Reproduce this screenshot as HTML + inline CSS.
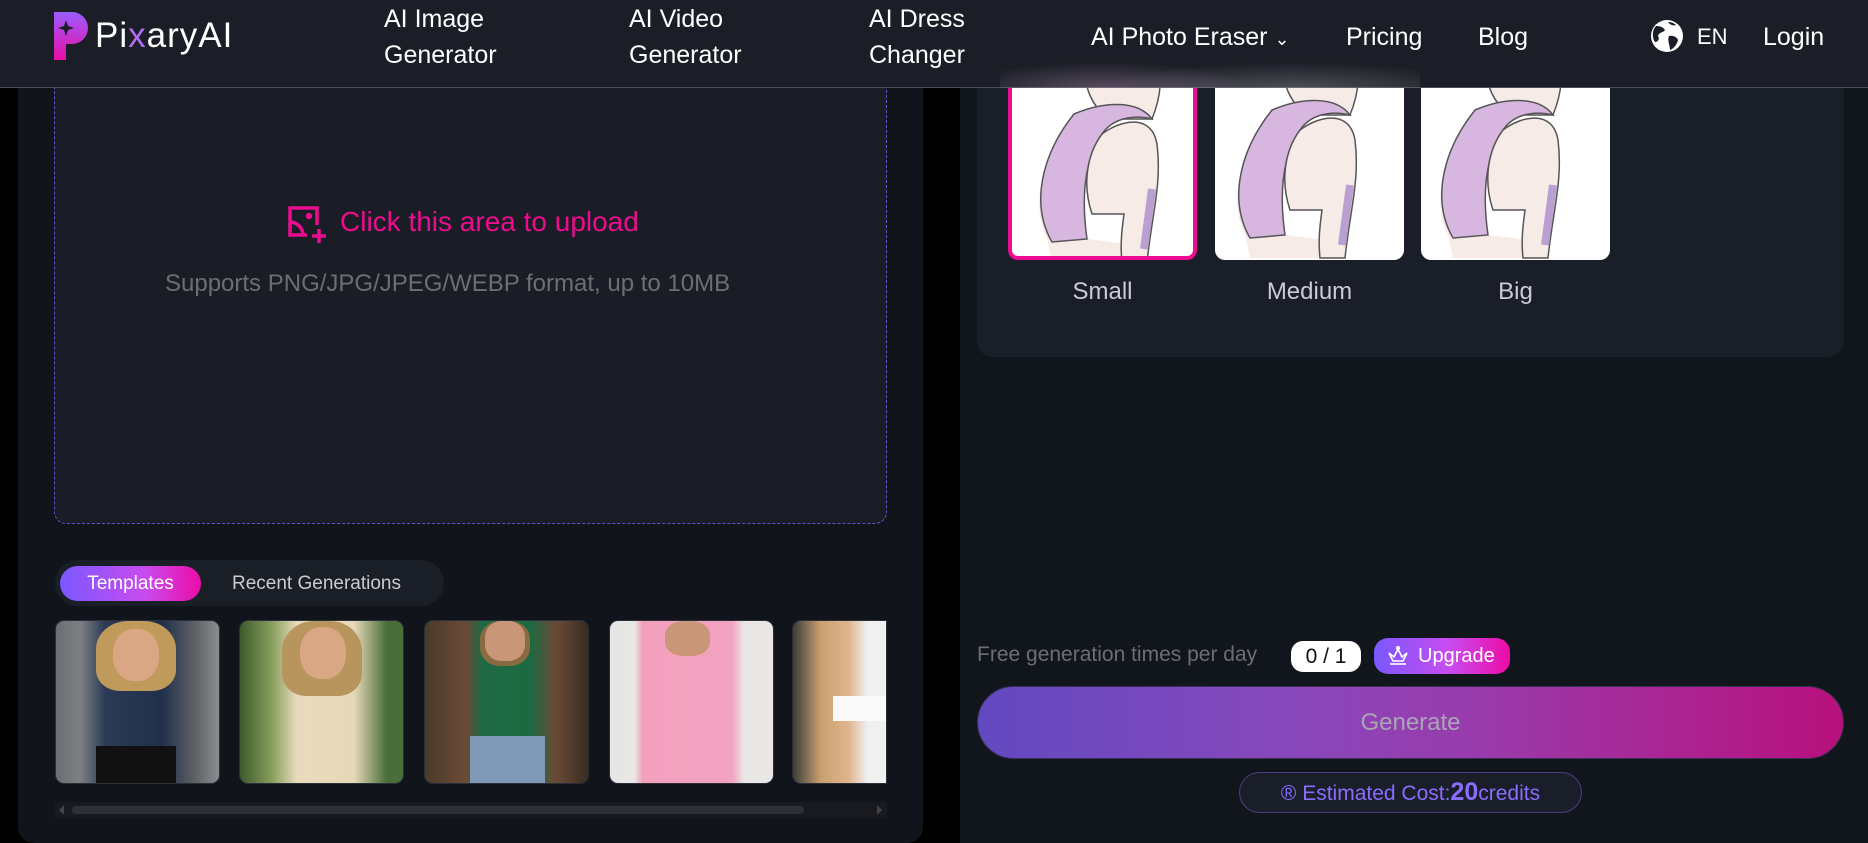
<!DOCTYPE html>
<html><head><meta charset="utf-8">
<style>
*{margin:0;padding:0;box-sizing:border-box}
body{width:1868px;height:843px;overflow:hidden;background:#000;font-family:"Liberation Sans",sans-serif;position:relative}
.abs{position:absolute}
#left{left:18px;top:0;width:905px;height:843px;background:#11141b;border-radius:0 0 16px 16px}
#right{left:960px;top:0;width:908px;height:843px;background:#11151c}
#upload{left:54px;top:-20px;width:833px;height:544px;background:#1a1d25;border:1px dashed #6a4bd0;border-radius:12px}
#hdr{left:0;top:0;width:1868px;height:88px;background:#1b1e26;border-bottom:1px solid #4a4d55}
.nav{color:#fff;font-size:25px;line-height:36px}
.tpl{top:620px;width:165px;height:164px;border-radius:9px;overflow:hidden;border:1px solid #2a2f3a}
.opt{top:20px;width:189px;height:240px;background:#fff;border-radius:10px;overflow:hidden}
.lbl{top:278px;color:#c9ccd2;font-size:24px;width:189px;text-align:center}
</style></head><body>
<div id="left" class="abs"></div>
<div id="right" class="abs"></div>
<div id="upload" class="abs"></div>
<svg class="abs" style="left:287px;top:205px" width="40" height="40" viewBox="0 0 40 40" fill="none" stroke="#ec0c8f" stroke-width="3.5"><path d="M20 30H3V3h27v17"/><path d="M3 17c7 0 13 6 13 13"/><circle cx="22" cy="11" r="1.5" fill="#ec0c8f"/><path d="M32 24v14M25 31h14"/></svg>
<div class="abs" style="left:340px;top:206px;color:#ec0c8f;font-size:28px">Click this area to upload</div>
<div class="abs" style="left:165px;top:270px;color:#6b6e75;font-size:24px">Supports PNG/JPG/JPEG/WEBP format, up to 10MB</div>

<div class="abs" style="left:55px;top:560px;width:389px;height:46px;border-radius:23px;background:#1a1e27"></div>
<div class="abs" style="left:60px;top:566px;width:141px;height:35px;border-radius:18px;background:linear-gradient(90deg,#7a58ff,#c84cf0 60%,#ec0ca6);color:#fff;font-size:19px;text-align:center;line-height:35px">Templates</div>
<div class="abs" style="left:232px;top:573px;color:#c9ccd2;font-size:19px">Recent Generations</div>

<div class="abs tpl" style="left:55px;background:linear-gradient(90deg,#6b6e72 0,#7d7f83 15%,#2b3a55 30%,#20304b 65%,#5e6064 85%,#8a8c90 100%)"><div class="abs" style="left:40px;top:0;width:80px;height:70px;border-radius:40% 40% 30% 30%;background:#c09a5a"></div><div class="abs" style="left:57px;top:8px;width:46px;height:52px;border-radius:45%;background:#d9a784"></div><div class="abs" style="left:40px;top:125px;width:80px;height:40px;background:#111"></div></div>
<div class="abs tpl" style="left:239px;background:linear-gradient(90deg,#3d5a2a,#8aa060 20%,#e8dbbd 35%,#e6d8b8 70%,#4a6e3a 90%)"><div class="abs" style="left:42px;top:0;width:80px;height:75px;border-radius:40% 40% 30% 30%;background:#b8955c"></div><div class="abs" style="left:60px;top:6px;width:46px;height:52px;border-radius:45%;background:#d9a784"></div></div>
<div class="abs tpl" style="left:424px;background:linear-gradient(90deg,#4a3a2a,#6b4a36 25%,#1f6a44 35%,#1d6a42 65%,#6b4a36 80%,#3a2c22)"><div class="abs" style="left:55px;top:0;width:50px;height:45px;border-radius:40%;background:#8a6a40"></div><div class="abs" style="left:60px;top:0;width:40px;height:40px;border-radius:40%;background:#c99677"></div><div class="abs" style="left:45px;top:115px;width:75px;height:50px;background:#7e9ab8"></div></div>
<div class="abs tpl" style="left:609px;background:linear-gradient(90deg,#e6e6e4,#e8e7e5 15%,#f3a0bd 20%,#f2a3c0 75%,#e8e7e5 82%)"><div class="abs" style="left:55px;top:0;width:45px;height:35px;border-radius:40%;background:#c99677"></div></div>
<div class="abs tpl" style="left:792px;width:95px;border-radius:9px 0 0 9px;background:linear-gradient(90deg,#3a3e3a,#caa070 30%,#e0b58e 60%,#f0f0f0 80%)"><div class="abs" style="left:40px;top:75px;width:55px;height:25px;background:#fafafa"></div></div>

<div class="abs" style="left:55px;top:802px;width:832px;height:16px;background:#181a1f"></div>
<div class="abs" style="left:72px;top:806px;width:732px;height:8px;border-radius:4px;background:#2e3036"></div>
<div class="abs" style="left:59px;top:805px;width:0;height:0;border-top:5px solid transparent;border-bottom:5px solid transparent;border-right:5px solid #444"></div>
<div class="abs" style="left:877px;top:805px;width:0;height:0;border-top:5px solid transparent;border-bottom:5px solid transparent;border-left:5px solid #444"></div>

<!-- right card -->
<div class="abs" style="left:977px;top:20px;width:867px;height:337px;background:#1a1e29;border-radius:16px"></div>
<svg width="0" height="0" style="position:absolute"><defs><g id="bra"><path d="M70 0 C75 30 80 40 95 55 L140 55 C150 30 150 10 145 0Z" fill="#f6ebe6" stroke="#555" stroke-width="1.5"/><path d="M62 50 C30 90 18 140 35 175 L40 198 L110 198 L115 180 L75 175 C70 140 72 100 80 70Z" fill="#f6ebe6"/><path d="M62 50 C90 38 125 35 140 55 C120 50 100 55 90 70 C70 100 70 140 75 175 L40 178 C18 140 30 90 62 50Z" fill="#d7b6e0" stroke="#555" stroke-width="1.5"/><path d="M90 70 C110 55 140 50 145 80 C150 120 140 150 135 198 L110 198 C108 180 110 165 112 150 L80 150 C70 120 75 90 90 70Z" fill="#f6ebe6" stroke="#555" stroke-width="1.5"/><path d="M140 125 L132 185" stroke="#b9a0d0" stroke-width="8"/></g></defs></svg>
<div class="abs opt" style="left:1008px;border:4px solid #ec0c8f"><svg width="189" height="240" viewBox="0 -40 189 240"><use href="#bra"/></svg></div>
<div class="abs opt" style="left:1215px"><svg width="189" height="240" viewBox="0 -40 189 240"><use href="#bra" transform="translate(-5 0)"/></svg></div>
<div class="abs opt" style="left:1421px"><svg width="189" height="240" viewBox="0 -40 189 240"><use href="#bra" transform="translate(-8 0)"/></svg></div>
<div class="abs lbl" style="left:1008px">Small</div>
<div class="abs lbl" style="left:1215px">Medium</div>
<div class="abs lbl" style="left:1421px">Big</div>

<div class="abs" style="left:977px;top:643px;color:#6b6e75;font-size:21px">Free generation times per day</div>
<div class="abs" style="left:1291px;top:641px;width:70px;height:31px;border-radius:12px;background:#fff;color:#111;font-size:21px;text-align:center;line-height:31px">0 / 1</div>
<div class="abs" style="left:1374px;top:638px;width:136px;height:36px;border-radius:14px;background:linear-gradient(90deg,#7a58ff,#c84cf0 55%,#ec0ca6);color:#fff;font-size:20px;line-height:36px;padding-left:44px">Upgrade</div>
<svg class="abs" style="left:1386px;top:645px" width="24" height="22" viewBox="0 0 24 22" fill="none" stroke="#fff" stroke-width="1.6"><path d="M3 8l4 8h10l4-8-5 4-4-8-4 8z"/><path d="M4 19h16"/><circle cx="12" cy="3" r="1.3"/></svg>
<div class="abs" style="left:977px;top:686px;width:867px;height:73px;border-radius:37px;background:linear-gradient(90deg,#6249c0,#8748bc 35%,#9b39aa 60%,#b8107c);border:1px solid #3a2f55;color:#a9a5b5;font-size:24px;text-align:center;line-height:71px">Generate</div>
<div class="abs" style="left:1239px;top:772px;width:343px;height:41px;border-radius:21px;background:#1a1e29;border:1px solid #4a3f85;color:#8a6cff;font-size:21px;text-align:center;line-height:39px">® Estimated Cost:<b style="font-size:25px">20</b>credits</div>

<!-- header -->
<div id="hdr" class="abs"></div>
<div class="abs" style="left:1000px;top:45px;width:420px;height:43px;background:radial-gradient(ellipse 35% 60% at 25% 100%,rgba(200,160,200,.35),transparent),radial-gradient(ellipse 45% 60% at 70% 100%,rgba(190,190,200,.3),transparent)"></div>
<svg class="abs" style="left:54px;top:12px" width="34" height="48" viewBox="0 0 34 48"><defs><linearGradient id="g" x1="0" y1="0" x2="0" y2="1"><stop offset="0" stop-color="#9b5cff"/><stop offset="1" stop-color="#ec0ca6"/></linearGradient></defs><path d="M0 0h18a16 16 0 0 1 0 32h-6v16H0z" fill="url(#g)"/><path d="M12 8l2 6 6 2-6 2-2 6-2-6-6-2 6-2z" fill="#1b1e26"/></svg>
<div class="abs" style="left:95px;top:16px;color:#fff;font-size:35px;letter-spacing:1px">Pi<span style="color:#b26cf0">x</span>aryAI</div>
<div class="abs nav" style="left:384px;top:1px">AI Image<br>Generator</div>
<div class="abs nav" style="left:629px;top:1px">AI Video<br>Generator</div>
<div class="abs nav" style="left:869px;top:1px">AI Dress<br>Changer</div>
<div class="abs nav" style="left:1091px;top:19px">AI Photo Eraser <span style="font-size:18px">⌄</span></div>
<div class="abs nav" style="left:1346px;top:19px">Pricing</div>
<div class="abs nav" style="left:1478px;top:19px">Blog</div>
<svg class="abs" style="left:1650px;top:18px" width="34" height="36" viewBox="0 0 34 36"><circle cx="17" cy="18" r="16" fill="#fff"/><path d="M6 8c4 0 7 1 9 4-2 3-6 2-7 6 2 3 0 6-3 6C2 20 2 12 6 8zM19 18c4-1 8 1 9 4-1 5-5 9-8 10 0-5-3-9-1-14zM18 4c3 0 6 1 8 3-3 1-6 0-8-3z" fill="#1b1e26"/></svg>
<div class="abs nav" style="left:1697px;top:19px;font-size:22px">EN</div>
<div class="abs nav" style="left:1763px;top:19px">Login</div>
</body></html>
